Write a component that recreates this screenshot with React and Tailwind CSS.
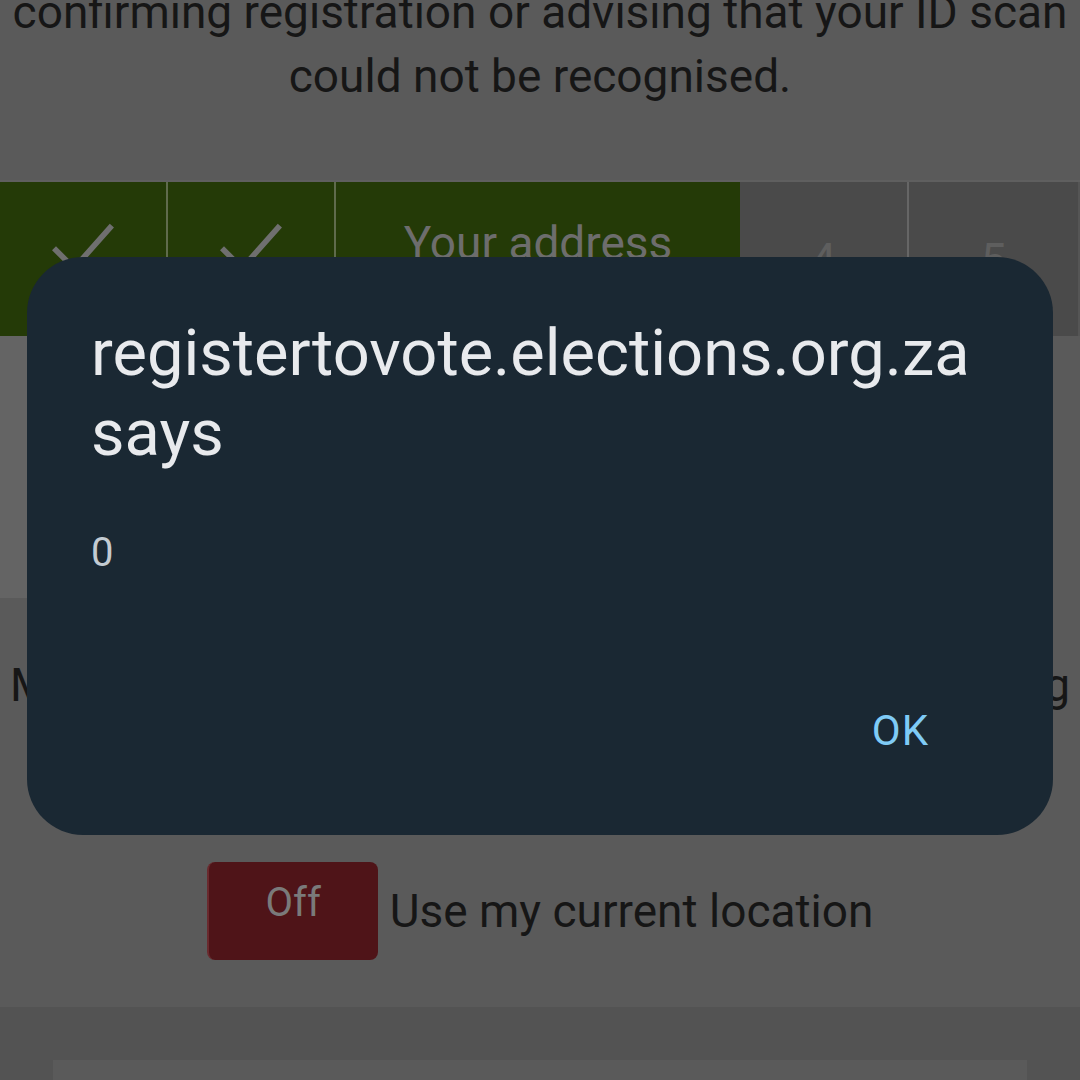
import React from 'react';

const Check = () => (
  <svg width="72" height="72" viewBox="0 0 64 64" fill="none" stroke="#6f6f6f" strokeWidth="5" strokeLinecap="square">
    <path d="M8 34 L24 50 L56 14" />
  </svg>
);

export default function App() {
  return (
    <div className="relative h-[1080px] w-[1080px] overflow-hidden bg-[#5a5a5a] font-['Roboto',sans-serif]">
      {/* page behind the dialog, already dimmed */}
      <div className="flex flex-col">
        <p className="-mt-[20px] text-center text-[46px] leading-[64px] text-[#161616]">
          confirming registration or advising that your ID scan
          <br />
          could not be recognised.
        </p>

        <div className="mt-[72px] flex h-[156px] border-t-2 border-[#5f5f5f]">
          <div className="flex w-[168px] justify-center border-r-2 border-[#5f6b4c] bg-[#243a07] pt-[30px]">
            <Check />
          </div>
          <div className="flex w-[168px] justify-center border-r-2 border-[#5f6b4c] bg-[#243a07] pt-[30px]">
            <Check />
          </div>
          <div className="flex w-[404px] justify-center bg-[#243a07] pt-[34px] text-[46px] leading-[54px] text-[#6d6d6d]">
            Your address
          </div>
          <div className="flex w-[169px] justify-center border-r-2 border-[#666] bg-[#4a4a4a] pt-[44px] text-[46px] text-[#5e5e5e]">
            4
          </div>
          <div className="flex flex-1 justify-center border-r-2 border-[#555] bg-[#4a4a4a] pt-[44px] text-[46px] text-[#5e5e5e]">
            5
          </div>
        </div>

        <div className="h-[262px] w-[1040px] bg-[#646464]" />

        <div className="mt-[37px] flex h-[100px] items-center justify-between px-[10px] text-[46px] text-[#161616]">
          <span>M</span>
          <span>g</span>
        </div>

        <div className="mt-[127px] flex items-center justify-center gap-[12px]">
          <div className="flex h-[98px] w-[171px] justify-center rounded-[8px] border-l-2 border-[#6a2a2e] bg-[#4f1418] pt-[16px] text-[40px] leading-[50px] text-[#7a7a7a]">
            Off
          </div>
          <span className="text-[46px] text-[#161616]">Use my current location</span>
        </div>

        <div className="mt-[47px] h-[200px] bg-[#535353] px-[53px] pt-[53px]">
          <div className="h-full bg-[#5a5a5a]" />
        </div>
      </div>

      {/* alert dialog */}
      <div className="absolute left-[27px] top-[257px] flex h-[578px] w-[1026px] flex-col rounded-[56px] bg-[#1a2833] px-[64px] pt-[56px]">
        <h1 className="text-[65px] leading-[80px] text-[#e8eaed]">
          registertovote.elections.org.za
          <br />
          says
        </h1>
        <p className="mt-[56px] text-[40px] leading-[48px] text-[#c3cbd2]">0</p>
        <div className="mt-auto mb-[80px] flex justify-end pr-[60px]">
          <span className="text-[42px] leading-[48px] tracking-[1px] text-[#7fcbf6]">OK</span>
        </div>
      </div>
    </div>
  );
}
